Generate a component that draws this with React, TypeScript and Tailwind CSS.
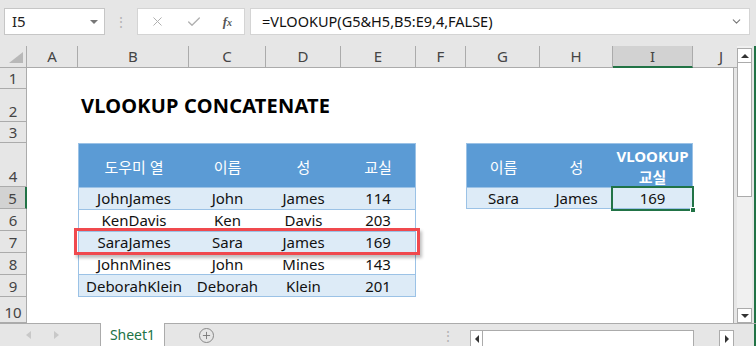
import { Check, X, ChevronDown, Plus } from 'lucide-react';

const font = "font-['Noto_Sans','Noto_Sans_CJK_KR',sans-serif]";

const colHeads = [
  { l: 'A', c: 'col-start-2' },
  { l: 'B', c: 'col-start-3' },
  { l: 'C', c: 'col-start-4' },
  { l: 'D', c: 'col-start-5' },
  { l: 'E', c: 'col-start-6' },
  { l: 'F', c: 'col-start-7' },
  { l: 'G', c: 'col-start-8' },
  { l: 'H', c: 'col-start-9' },
  { l: 'I', c: 'col-start-10' },
  { l: 'J', c: 'col-start-11' },
];

const rowHeads = [
  { n: 1, c: 'row-start-2' },
  { n: 2, c: 'row-start-3' },
  { n: 3, c: 'row-start-4' },
  { n: 4, c: 'row-start-5' },
  { n: 5, c: 'row-start-6' },
  { n: 6, c: 'row-start-7' },
  { n: 7, c: 'row-start-8' },
  { n: 8, c: 'row-start-9' },
  { n: 9, c: 'row-start-10' },
  { n: 10, c: 'row-start-11' },
];

const people = [
  ['JohnJames', 'John', 'James', '114'],
  ['KenDavis', 'Ken', 'Davis', '203'],
  ['SaraJames', 'Sara', 'James', '169'],
  ['JohnMines', 'John', 'Mines', '143'],
  ['DeborahKlein', 'Deborah', 'Klein', '201'],
];

export default function App() {
  return (
    <div className={`w-[756px] h-[346px] bg-[#e6e6e6] flex flex-col overflow-hidden text-[#222] ${font}`}>
      {/* formula bar */}
      <div className="h-[46px] flex items-start pt-[8px] shrink-0">
        <div className="ml-[4px] w-[101px] h-[27px] bg-white border border-[#c6c6c6] flex items-center pl-[7px] pr-[6px] text-[15px]">
          <span className="flex-1">I5</span>
          <span className="w-0 h-0 border-l-[4px] border-r-[4px] border-t-[4px] border-l-transparent border-r-transparent border-t-[#777]" />
        </div>
        <div className="w-[32px] h-[27px] flex items-center justify-center text-[#b4b4b4] text-[14px]">⋮</div>
        <div className="w-[108px] h-[27px] bg-white border border-[#d4d4d4] flex items-center justify-between pl-[12px] pr-[12px]">
          <X size={15} strokeWidth={1.6} className="text-[#b0b0b0]" />
          <Check size={16} strokeWidth={2} className="text-[#b0b0b0]" />
          <span className="font-['Liberation_Serif',serif] italic text-[13px] text-[#555] font-bold">
            f<span className="text-[10px]">x</span>
          </span>
        </div>
        <div className="ml-[5px] w-[500px] h-[27px] bg-white border border-[#d4d4d4] flex items-center pl-[11px] pr-[6px] text-[14.5px] text-[#111]">
          <span className="flex-1">=VLOOKUP(G5&amp;H5,B5:E9,4,FALSE)</span>
          <ChevronDown size={13} strokeWidth={2} className="text-[#777]" />
        </div>
      </div>

      {/* sheet + vertical scrollbar */}
      <div className="flex h-[277px] shrink-0">
        <div className="w-[737px] grid grid-cols-[27px_51px_111px_77px_75px_75px_50px_74px_73px_80px_1fr] grid-rows-[22px_21px_33px_21px_44px_22px_22px_22px_22px_22px_1fr]">
          {/* cell area */}
          <div className="col-start-2 col-end-12 row-start-2 row-end-12 mr-[3px] bg-white border-r border-[#ababab]" />
          {/* corner */}
          <div className="col-start-1 row-start-1 border-r border-b border-[#ababab] flex items-end justify-end pr-[3px] pb-[4px]">
            <div className="w-0 h-0 border-l-[14px] border-b-[11px] border-l-transparent border-b-[#b8b8b8]" />
          </div>
          {colHeads.map((h) => (
            <div
              key={h.l}
              className={`${h.c} row-start-1 flex items-center justify-center text-[15px] text-[#444] ${
                h.l === 'I'
                  ? 'bg-[#d2d2d2] border-r border-r-[#ababab] border-b-2 border-b-[#217346]'
                  : h.l === 'J'
                    ? 'border-b border-[#ababab] justify-end pr-[14px]'
                    : 'border-r border-b border-[#ababab]'
              }`}
            >
              {h.l}
            </div>
          ))}
          {rowHeads.map((r) => (
            <div
              key={r.n}
              className={`${r.c} col-start-1 flex items-end justify-center text-[15px] leading-[20px] text-[#444] border-b ${
                r.n === 5
                  ? 'bg-[#d2d2d2] border-r-2 border-r-[#217346] border-b-[#ababab]'
                  : 'border-r border-[#ababab]'
              }`}
            >
              {r.n}
            </div>
          ))}

          {/* title */}
          <div className="col-start-3 col-end-7 row-start-3 flex items-end pl-[3px] pb-[6px] whitespace-nowrap text-[20px] tracking-[0.2px] font-bold text-black leading-none">
            VLOOKUP CONCATENATE
          </div>

          {/* table 1 */}
          <div className="col-start-3 col-end-7 row-start-5 row-end-11 grid grid-rows-[43px_repeat(5,minmax(0,1fr))] border border-[#9bc2e6] text-[15px] leading-[20px] text-[#111]">
            <div className="bg-[#5b9bd5] text-white grid grid-cols-[110px_77px_75px_1fr] items-center text-center pt-[2px]">
              <span>도우미 열</span>
              <span>이름</span>
              <span>성</span>
              <span>교실</span>
            </div>
            {people.map((p, i) => (
              <div
                key={p[0]}
                className={`grid grid-cols-[110px_77px_75px_1fr] items-center text-center border-t border-[#9bc2e6] ${
                  i % 2 === 0 ? 'bg-[#ddebf7]' : 'bg-white'
                }`}
              >
                {p.map((v, j) => (
                  <span key={j}>{v}</span>
                ))}
              </div>
            ))}
          </div>

          {/* red highlight */}
          <div className="col-start-3 col-end-7 row-start-8 -ml-[4px] -mr-[4px] -mt-[3px] -mb-[2px] border-[3px] border-[#f0494e] shadow-[2px_3px_3px_rgba(0,0,0,0.25)] z-10 pointer-events-none" />

          {/* table 2 */}
          <div className="col-start-8 col-end-11 row-start-5 row-end-7 grid grid-rows-[43px_minmax(0,1fr)] border border-[#9bc2e6] text-[15px] leading-[20px] text-[#111]">
            <div className="bg-[#5b9bd5] text-white grid grid-cols-[73px_73px_1fr] items-center text-center pt-[2px]">
              <span>이름</span>
              <span>성</span>
              <span className="font-bold leading-[21px]">
                VLOOKUP
                <br />
                교실
              </span>
            </div>
            <div className="grid grid-cols-[73px_73px_1fr] items-center text-center border-t border-[#9bc2e6] bg-[#ddebf7]">
              <span>Sara</span>
              <span>James</span>
              <span>169</span>
            </div>
          </div>

          {/* selected cell */}
          <div className="col-start-10 row-start-6 -ml-[2px] -mr-[1px] -mt-[1px] -mb-[2px] border-2 border-[#217346] relative z-20 pointer-events-none">
            <div className="absolute -right-[4px] -bottom-[4px] w-[6px] h-[6px] bg-[#217346] border border-white" />
          </div>
        </div>

        {/* vertical scrollbar */}
        <div className="w-[15px] flex flex-col pt-[2px] bg-[#f0f0f0]">
          <div className="h-[15px] bg-white border border-[#ababab] flex items-center justify-center">
            <span className="w-0 h-0 border-l-[4px] border-r-[4px] border-b-[4px] border-l-transparent border-r-transparent border-b-[#333]" />
          </div>
          <div className="h-[134px] bg-white border border-[#ababab] border-t-0" />
          <div className="flex-1" />
          <div className="h-[15px] bg-white border border-[#ababab] flex items-center justify-center">
            <span className="w-0 h-0 border-l-[4px] border-r-[4px] border-t-[4px] border-l-transparent border-r-transparent border-t-[#333]" />
          </div>
        </div>
        <div className="w-[2px]" />
        <div className="w-[2px] bg-[#217346]" />
      </div>

      {/* sheet tabs */}
      <div className="flex-1 flex items-stretch">
        <div className="w-[100px] flex items-center pl-[26px] gap-[23px] border-t border-[#ababab]">
          <span className="w-0 h-0 border-t-[4px] border-b-[4px] border-r-[5px] border-t-transparent border-b-transparent border-r-[#c8c8c8]" />
          <span className="w-0 h-0 border-t-[4px] border-b-[4px] border-l-[5px] border-t-transparent border-b-transparent border-l-[#c8c8c8]" />
        </div>
        <div className="w-[65px] bg-white border-x border-[#ababab] flex items-center justify-center text-[14px] text-[#217346]">
          Sheet1
        </div>
        <div className="flex-1 flex items-stretch border-t border-[#ababab]">
          <div className="w-[83px] flex items-center justify-center">
            <div className="w-[15px] h-[15px] rounded-full border border-[#888] flex items-center justify-center">
              <Plus size={11} strokeWidth={2} className="text-[#777]" />
            </div>
          </div>
          <div className="w-[207px] flex items-center justify-end text-[#b4b4b4] text-[14px]">⋮</div>
          <div className="flex-1 flex items-end pl-[15px]">
            <div className="w-[13px] h-[16px] bg-white border border-[#ababab] border-b-0 flex items-center justify-center">
              <span className="w-0 h-0 border-t-[4px] border-b-[4px] border-r-[4px] border-t-transparent border-b-transparent border-r-[#333]" />
            </div>
            <div className="w-[211px] h-[16px] bg-white border border-[#ababab] border-l-0 border-b-0" />
            <div className="w-[25px]" />
            <div className="w-[15px] h-[16px] bg-white border border-[#ababab] border-b-0 flex items-center justify-center">
              <span className="w-0 h-0 border-t-[4px] border-b-[4px] border-l-[4px] border-t-transparent border-b-transparent border-l-[#333]" />
            </div>
            <div className="flex-1" />
            <div className="w-[2px] self-stretch bg-[#217346]" />
          </div>
        </div>
      </div>
    </div>
  );
}
